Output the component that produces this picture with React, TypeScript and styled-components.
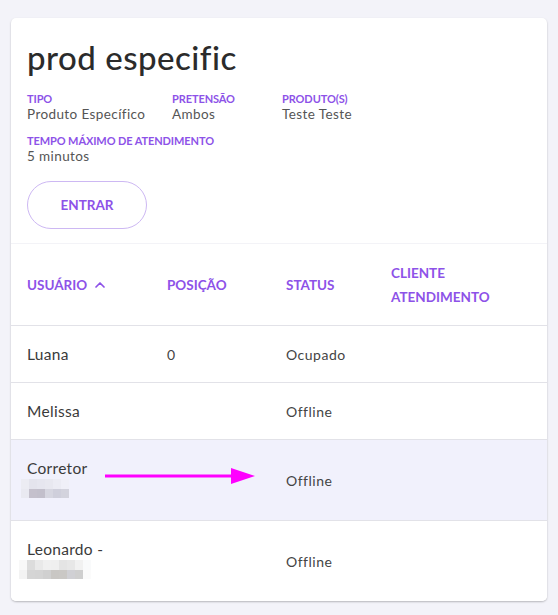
import { FC } from 'react'
import styled, { createGlobalStyle } from 'styled-components'
import { ChevronUp } from 'lucide-react'

const GlobalStyle = createGlobalStyle`
  body {
    margin: 0;
    background: #f3f3f9;
    font-family: Lato, 'Open Sans', sans-serif;
  }
`

type Cell = string
type BlurRow = Cell[]

const corretorBlur: BlurRow[] = [
  ['#ececf3', '#e4e4ed', '#e6e6ef', '#e8e8f0', '#ececf4', '#f0f0f8'],
  ['#e9e9f1', '#c4c0cc', '#c2bfcb', '#d6d6e0', '#cfcfdb', '#d3d3dd'],
]

const leonardoBlur: BlurRow[] = [
  ['#f8f8f8', '#dcdcdc', '#e9e9e9', '#f0f0f0', '#efefef', '#e4e4e4', '#e7e7e7', '#f1f1f1', '#f9fafb'],
  ['#f3f3f3', '#d5d5d5', '#d4d4d4', '#d0d0d0', '#c9c7c4', '#cac8c5', '#d0d0d4', '#cfcfcf', '#fbfbfb'],
]

type Row = {
  name: string
  blur?: BlurRow[]
  blurOffset?: number
  position?: string
  status: string
  highlight?: boolean
  arrow?: boolean
}

const rows: Row[] = [
  { name: 'Luana', position: '0', status: 'Ocupado' },
  { name: 'Melissa', status: 'Offline' },
  { name: 'Corretor', blur: corretorBlur, blurOffset: -6, status: 'Offline', highlight: true, arrow: true },
  { name: 'Leonardo -', blur: leonardoBlur, blurOffset: -8, status: 'Offline' },
]

const Pixelated: FC<{ data: BlurRow[]; offset: number }> = ({ data, offset }) => (
  <StyleDivPixels $offset={offset}>
    {data.map((line, i) => (
      <StyleDivPixelLine key={i}>
        {line.map((c, j) => (
          <StyleSpanPixel key={j} $c={c} />
        ))}
      </StyleDivPixelLine>
    ))}
  </StyleDivPixels>
)

const Arrow: FC = () => (
  <StyleSvgArrow width={152} height={18} viewBox={'0 0 152 18'}>
    <rect x={0} y={7.5} width={130} height={3} fill={'#ff00ff'} />
    <polygon points={'126,1 150,9 126,17'} fill={'#ff00ff'} />
  </StyleSvgArrow>
)

const App: FC = () => (
  <>
    <GlobalStyle />
    <StyleDivPage>
      <StyleDivCard>
        <StyleDivInfo>
          <StyleH1Title>{'prod especific'}</StyleH1Title>
          <StyleDivFields>
            <StyleDivField>
              <StyleSpanLabel>{'Tipo'}</StyleSpanLabel>
              <StyleSpanValue>{'Produto Específico'}</StyleSpanValue>
            </StyleDivField>
            <StyleDivField>
              <StyleSpanLabel>{'Pretensão'}</StyleSpanLabel>
              <StyleSpanValue>{'Ambos'}</StyleSpanValue>
            </StyleDivField>
            <StyleDivField>
              <StyleSpanLabel>{'Produto(s)'}</StyleSpanLabel>
              <StyleSpanValue>{'Teste Teste'}</StyleSpanValue>
            </StyleDivField>
            <StyleDivField $wide>
              <StyleSpanLabel>{'Tempo máximo de atendimento'}</StyleSpanLabel>
              <StyleSpanValue>{'5 minutos'}</StyleSpanValue>
            </StyleDivField>
          </StyleDivFields>
          <StyleButtonEnter>{'Entrar'}</StyleButtonEnter>
        </StyleDivInfo>

        <StyleDivTable>
          <StyleDivHead>
            <StyleDivHeadCell>
              {'Usuário'}
              <ChevronUp size={16} strokeWidth={2.6} />
            </StyleDivHeadCell>
            <StyleDivHeadCell>{'Posição'}</StyleDivHeadCell>
            <StyleDivHeadCell>{'Status'}</StyleDivHeadCell>
            <StyleDivHeadCell>
              {'Cliente'}
              <br />
              {'Atendimento'}
            </StyleDivHeadCell>
          </StyleDivHead>
          {rows.map((row) => (
            <StyleDivRow key={row.name} $highlight={row.highlight}>
              <StyleDivNameCell>
                <StyleSpanName>{row.name}</StyleSpanName>
                {row.blur && <Pixelated data={row.blur} offset={row.blurOffset ?? 0} />}
                {row.arrow && <Arrow />}
              </StyleDivNameCell>
              <StyleDivCell>{row.position ?? ''}</StyleDivCell>
              <StyleDivCell>{row.status}</StyleDivCell>
              <StyleDivCell />
            </StyleDivRow>
          ))}
        </StyleDivTable>
      </StyleDivCard>
    </StyleDivPage>
  </>
)

export default App

const StyleDivPage = styled.div`
  padding: 18px 11px 13px;
`

const StyleDivCard = styled.div`
  background: #fff;
  border-radius: 5px;
  box-shadow: 0 1px 2px rgba(0, 0, 0, 0.25);
  overflow: hidden;
`

const StyleDivInfo = styled.div`
  padding: 19px 16px 14px;
  border-bottom: 1px solid #f3f3f7;
`

const StyleH1Title = styled.h1`
  margin: 0 0 15px;
  font-size: 33px;
  line-height: 40px;
  font-weight: 500;
  color: #2b2b2b;
  letter-spacing: 0.5px;
`

const StyleDivFields = styled.div`
  display: grid;
  grid-template-columns: 145px 110px auto;
  row-gap: 12px;
`

const StyleDivField = styled.div<{ $wide?: boolean }>`
  display: flex;
  flex-direction: column;
  grid-column: ${({ $wide }) => ($wide ? '1 / -1' : 'auto')};
`

const StyleSpanLabel = styled.span`
  font-size: 11px;
  line-height: 14px;
  font-weight: 700;
  text-transform: uppercase;
  color: #8d52e8;
  letter-spacing: -0.1px;
`

const StyleSpanValue = styled.span`
  font-size: 13.5px;
  line-height: 16px;
  color: #555;
  letter-spacing: 0.4px;
`

const StyleButtonEnter = styled.button`
  margin-top: 17px;
  width: 120px;
  height: 48px;
  border-radius: 24px;
  border: 1px solid #cdb8f3;
  background: #fff;
  color: #8d52e8;
  font-family: inherit;
  font-size: 13.5px;
  font-weight: 700;
  text-transform: uppercase;
  cursor: pointer;
`

const StyleDivTable = styled.div`
  display: flex;
  flex-direction: column;
`

const gridCols = `
  display: grid;
  grid-template-columns: 140px 119px 105px 1fr;
`

const StyleDivHead = styled.div`
  ${gridCols}
  height: 81px;
  align-items: center;
  border-bottom: 1px solid #e2e2e8;
`

const StyleDivHeadCell = styled.div`
  display: flex;
  align-items: center;
  flex-wrap: wrap;
  gap: 5px;
  padding-left: 16px;
  font-size: 13.5px;
  line-height: 24px;
  font-weight: 700;
  text-transform: uppercase;
  color: #8d52e8;
  letter-spacing: 0px;

  br {
    flex-basis: 100%;
  }
`

const StyleDivRow = styled.div<{ $highlight?: boolean }>`
  ${gridCols}
  align-items: center;
  background: ${({ $highlight }) => ($highlight ? '#f1f1fc' : '#fff')};
  border-bottom: 1px solid #e2e2e8;

  &:last-child {
    border-bottom: none;
  }
`

const StyleDivCell = styled.div`
  padding-left: 16px;
  font-size: 14px;
  color: #444;
  letter-spacing: 0.5px;
`

const StyleDivNameCell = styled.div`
  position: relative;
  padding: 18px 0 18px 16px;
  display: flex;
  flex-direction: column;
  align-items: flex-start;
`

const StyleSpanName = styled.span`
  font-size: 15.5px;
  line-height: 20px;
  color: #3a3a3a;
  letter-spacing: 0.3px;
`

const StyleDivPixels = styled.div<{ $offset: number }>`
  display: flex;
  flex-direction: column;
  margin: 1px 0 4px ${({ $offset }) => $offset}px;
`

const StyleDivPixelLine = styled.div`
  display: flex;
  height: 9.5px;
`

const StyleSpanPixel = styled.span<{ $c: string }>`
  width: 8px;
  height: 100%;
  background: ${({ $c }) => $c};
`

const StyleSvgArrow = styled.svg`
  position: absolute;
  left: 94px;
  top: 27px;
`
